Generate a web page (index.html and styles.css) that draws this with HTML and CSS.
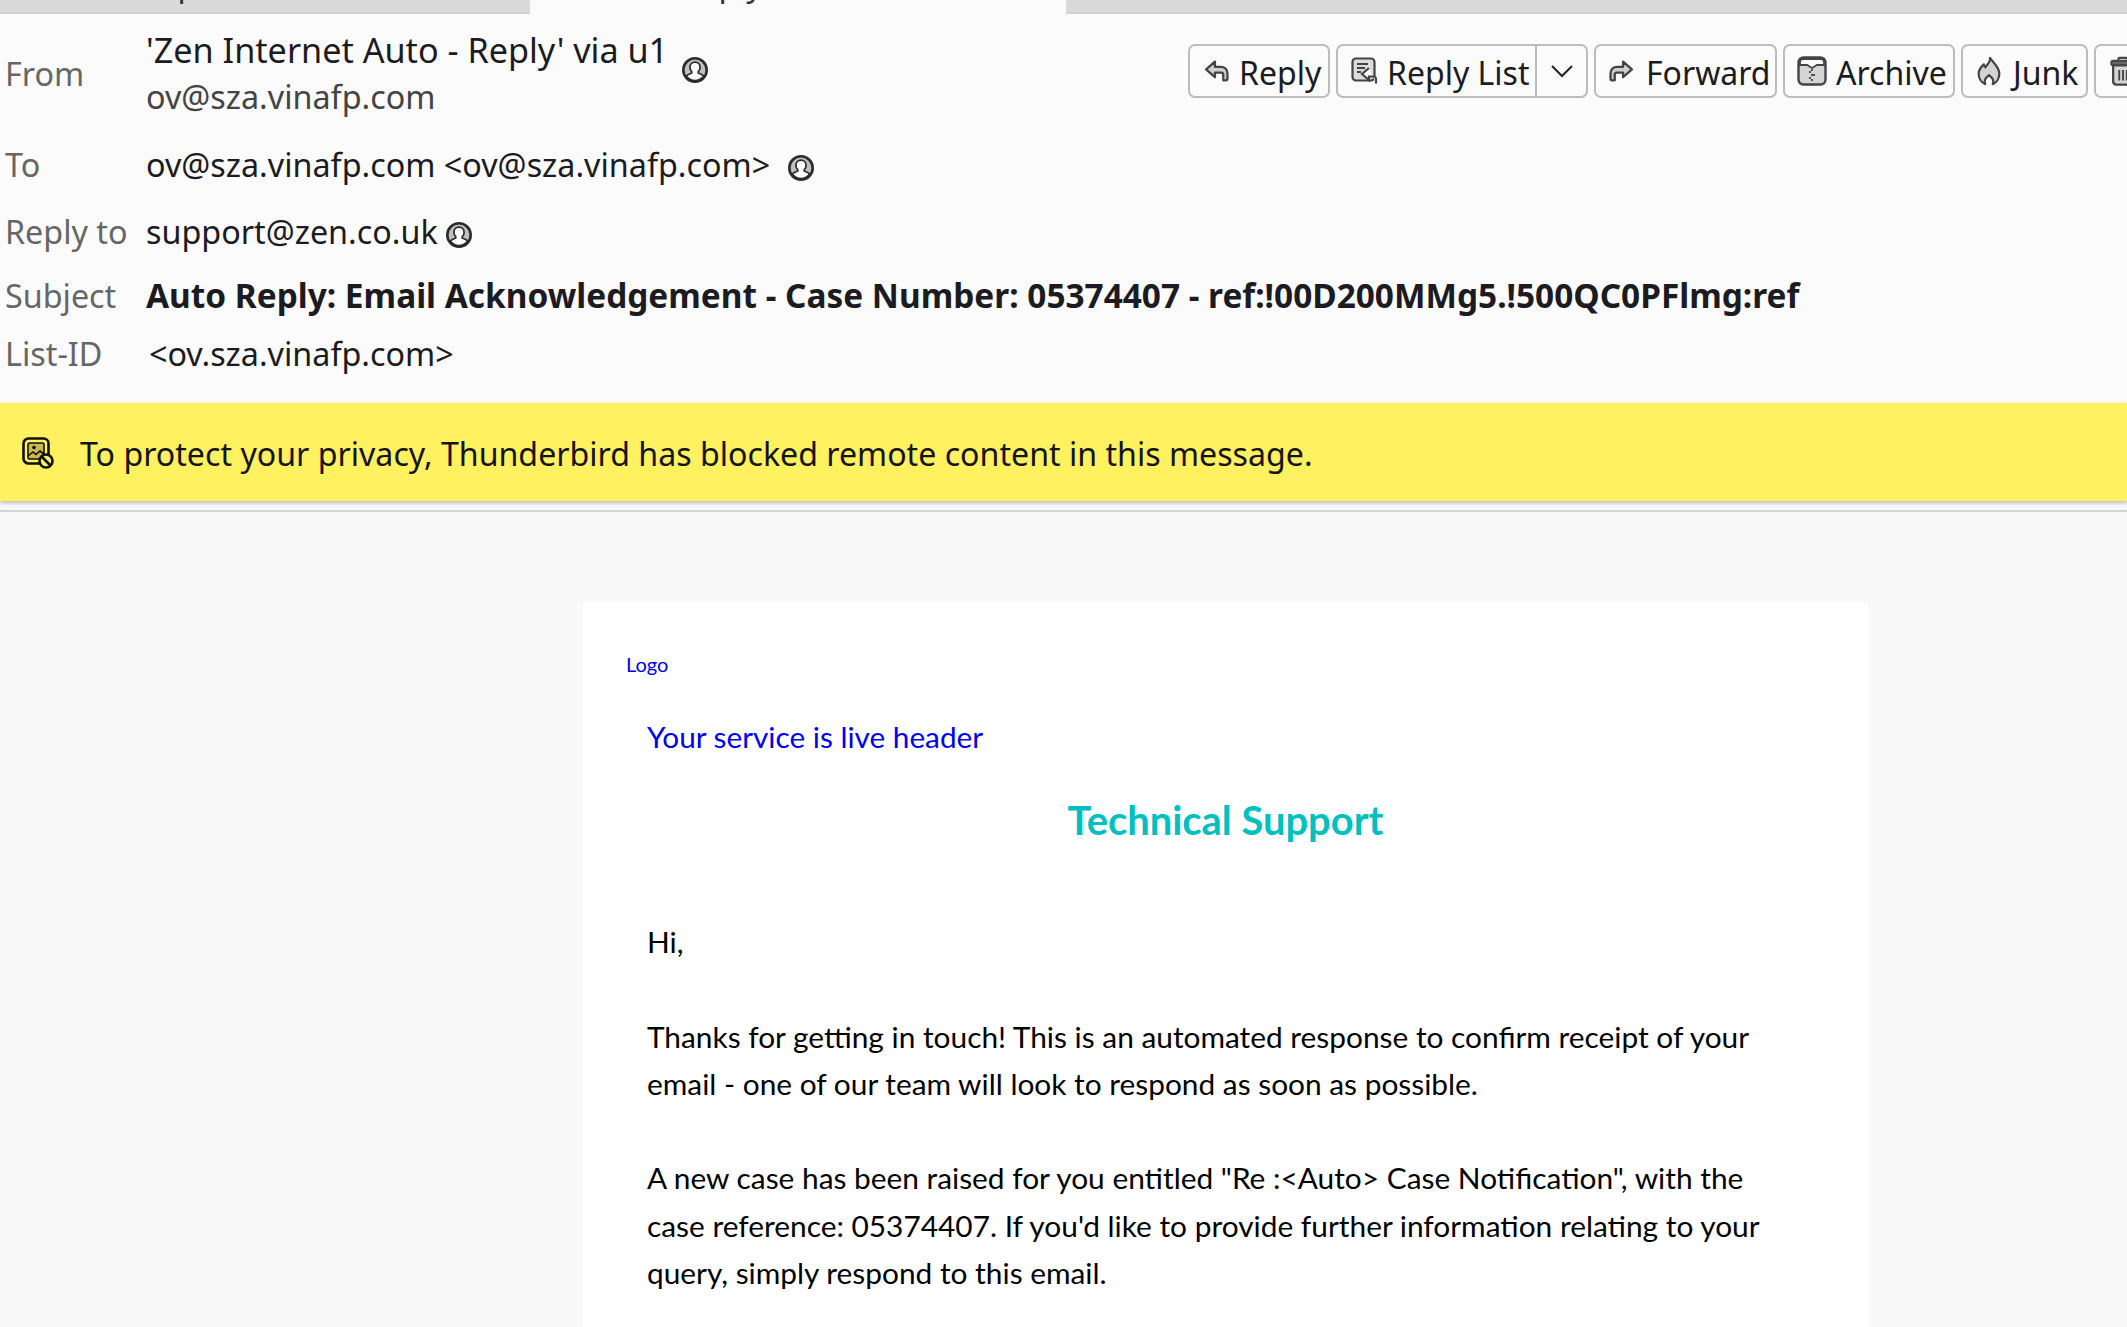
FILE: index.html
```html
<!DOCTYPE html>
<html>
<head>
  <meta charset="UTF-8">
  <title>Auto Reply: Email Acknowledgement</title>
  <link rel="stylesheet" href="styles.css">
</head>
<body>
  <svg class="defs" width="0" height="0">
    <symbol id="person" viewBox="0 0 24 24">
      <circle cx="12" cy="12" r="10.800" fill="#c0c0c0" stroke="#2b2b2b" stroke-width="2.400"/>
      <path d="M12 4.800c2.800 0 4.700 2.100 4.700 4.800 0 1.700-.7 3-1.700 3.900v1.300l3.600 1.600c.8.400 1.100 1 1.100 1.700A10.300 10.300 0 0 1 12 21.800a10.300 10.300 0 0 1-7.700-3.700c0-.7.300-1.300 1.100-1.700L9 14.800v-1.300c-1-.9-1.700-2.200-1.700-3.900 0-2.700 1.900-4.800 4.700-4.800z" fill="#fff" stroke="#2b2b2b" stroke-width="1.600"/>
    </symbol>
  </svg>

  <div class="tabs">
    <div class="tab tab-first"><span>Sp</span></div>
    <div class="tab tab-active"><span>Auto Reply</span></div>
    <div class="tab tab-rest"></div>
  </div>

  <header class="msg-header">
    <div class="row from-row">
      <div class="label">From</div>
      <div class="sender">
        <div class="sender-name">'Zen Internet Auto - Reply' via u1 <svg class="person person-from"><use href="#person"/></svg></div>
        <div class="sender-mail">ov@sza.vinafp.com</div>
      </div>
      <div class="toolbar">
        <button class="btn btn-reply">
          <svg class="ico" viewBox="0 0 24 24"><path d="M10.500 2.500 2 10l8.500 7.500V13h6c1.400 0 2 .7 2 2v5.500h2.500c1 0 1.500-.5 1.500-1.500v-5c0-4-2.500-6.500-6.500-6.500h-5.500z" fill="#d0d0d0" stroke="#444" stroke-width="2.200" stroke-linejoin="round"/></svg>
          Reply
        </button>
        <div class="btn btn-split">
          <span class="split-main">
            <svg class="ico ico-list" viewBox="0 0 28 28"><rect x="1.500" y="1.500" width="22" height="22" rx="3.500" fill="#dcdcdc" stroke="#444" stroke-width="2.200"/><path d="M6 7h11M6 11h8M6 15h4" stroke="#444" stroke-width="2"/><path d="m18 11-7 6 7 6v-3.500h4c1.500 0 3 1 3 2.500v4.500" fill="#fbfbfb" stroke="#444" stroke-width="2.200"/></svg>
            Reply List
          </span>
          <span class="split-arrow"><svg viewBox="0 0 24 14" width="24" height="14"><path d="m2 2 10 10L22 2" fill="none" stroke="#222" stroke-width="2"/></svg></span>
        </div>
        <button class="btn btn-forward">
          <svg class="ico" viewBox="0 0 24 24"><path d="M13.500 2.500 22 10l-8.500 7.500V13h-6c-1.400 0-2 .7-2 2v5.500H3c-1 0-1.500-.5-1.500-1.500v-5c0-4 2.500-6.500 6.500-6.500h5.500z" fill="#d0d0d0" stroke="#444" stroke-width="2.200" stroke-linejoin="round"/></svg>
          Forward
        </button>
        <button class="btn btn-archive">
          <svg class="ico ico-big" viewBox="0 0 30 30"><rect x="1.500" y="1.500" width="27" height="27" rx="5" fill="#d4d4d4" stroke="#444" stroke-width="2.400"/><path d="M3 9V6a3 3 0 0 1 3-3h18a3 3 0 0 1 3 3v3h-7l-5 3-5-3z" fill="#fbfbfb" stroke="#444" stroke-width="1.800"/><path d="M15 13v2m0 3v2m0 3v2M13 15v2m4 1v2m-4 1v2" stroke="#333" stroke-width="1.600"/></svg>
          Archive
        </button>
        <button class="btn btn-junk">
          <svg class="ico ico-big" viewBox="0 0 26 32"><path d="M14 2c1 4-2 6-5 10-1-1-1.500-2-1.500-3C4 12 2 15.500 2 19c0 5 3 9.500 7 11-1.500-3 0-6.500 4-9.500 4 3 5.500 6.500 4 9.500 4-1.500 7-6 7-11 0-7-5-10-10-17z" fill="#d4d4d4" stroke="#444" stroke-width="2.400" stroke-linejoin="round"/></svg>
          Junk
        </button>
        <button class="btn btn-delete" aria-label="Delete">
          <svg class="ico ico-big" viewBox="0 0 28 32"><path d="M9 5V3.500C9 2.500 9.500 2 10.500 2h7c1 0 1.500.5 1.500 1.500V5" fill="none" stroke="#444" stroke-width="2.200"/><rect x="1.500" y="5" width="25" height="5" rx="2" fill="#666" stroke="#444" stroke-width="2"/><path d="M3.500 10v17c0 2 1 3.500 3.500 3.500h14c2.500 0 3.500-1.500 3.500-3.500V10z" fill="#d4d4d4" stroke="#444" stroke-width="2.400"/><path d="M10 15v11m4-11v11m4-11v11" stroke="#444" stroke-width="2"/></svg>
        </button>
      </div>
    </div>

    <div class="row row-to">
      <div class="label">To</div>
      <div class="value">ov@sza.vinafp.com &lt;ov@sza.vinafp.com&gt; <svg class="person person-to"><use href="#person"/></svg></div>
    </div>
    <div class="row row-reply">
      <div class="label">Reply to</div>
      <div class="value">support@zen.co.uk <svg class="person person-tight"><use href="#person"/></svg></div>
    </div>
    <div class="row row-subject">
      <div class="label">Subject</div>
      <div class="value subject">Auto Reply: Email Acknowledgement - Case Number: 05374407 - ref:!00D200MMg5.!500QC0PFlmg:ref</div>
    </div>
    <div class="row row-list">
      <div class="label">List-ID</div>
      <div class="value list-id">&lt;ov.sza.vinafp.com&gt;</div>
    </div>
  </header>

  <div class="notice">
    <svg class="notice-ico" viewBox="0 0 32 32">
      <rect x="1.500" y="1.500" width="25" height="25" rx="5" fill="none" stroke="#111" stroke-width="2.600"/>
      <rect x="6" y="6" width="16" height="16" rx="1.500" fill="#c8b850" stroke="#111" stroke-width="1.600"/>
      <circle cx="12" cy="10.500" r="1.800" fill="#111"/>
      <path d="m6 19 5-4 3 2.500 4-3.500 4 3" fill="none" stroke="#111" stroke-width="1.600"/>
      <circle cx="24" cy="24" r="6.500" fill="#fff15f" stroke="#111" stroke-width="2.600"/>
      <path d="m19.500 19.500 9 9" stroke="#111" stroke-width="2.600"/>
    </svg>
    <span>To protect your privacy, Thunderbird has blocked remote content in this message.</span>
  </div>
  <div class="divider"></div>

  <main class="mail-area">
    <div class="card">
      <a class="logo">Logo</a>
      <div class="live-header">Your service is live header</div>
      <h2 class="title">Technical Support</h2>
      <div class="content">
        <p>Hi,</p>
        <p>Thanks for getting in touch! This is an automated response to confirm receipt of your<br>email - one of our team will look to respond as soon as possible.</p>
        <p>A new case has been raised for you entitled "Re :&lt;Auto&gt; Case Notification", with the<br>case reference: 05374407. If you'd like to provide further information relating to your<br>query, simply respond to this email.</p>
      </div>
    </div>
  </main>
</body>
</html>
```

FILE: styles.css
```css
html, body {
  margin: 0;
  height: 100%;
  overflow: hidden;
}

body {
  width: 2127px;
  height: 1327px;
  background-color: #f9f9fa;
  font-family: "Noto Sans", "Open Sans", sans-serif;
  color: #1c1b22;
}

.defs {
  position: absolute;
}

/* tab strip, cut off by the top of the shot */
.tabs {
  display: flex;
  height: 14px;
  overflow: hidden;
  font-size: 32px;
  line-height: 40px;
}

.tab {
  display: flex;
  align-items: flex-end;
  background: linear-gradient(#dadada 80%, #cfcfcf);
}

.tab span {
  margin-bottom: 10px;
  white-space: nowrap;
  color: #333;
}

.tab-first {
  width: 530px;
  padding-left: 160px;
  box-sizing: border-box;
}

.tab-active {
  width: 536px;
  padding-left: 71px;
  box-sizing: border-box;
  background: #fbfbfb;
}

.tab-rest {
  flex: 1;
}

.msg-header {
  padding: 12px 0 26px 5px;
  background-color: #fbfbfb;
  font-size: 32.300px;
  line-height: 47px;
}

.row {
  display: flex;
}

.label {
  width: 141px;
  flex: none;
  color: #666;
}

.from-row .label {
  align-self: center;
}

.row-to {
  margin-top: 21px;
}

.row-reply {
  margin-top: 20px;
}

.row-subject {
  margin-top: 17px;
}

.row-list {
  margin-top: 11px;
}

.sender {
  width: 1042px;
  flex: none;
}

.sender-name {
  height: 47px;
  font-size: 34.200px;
}

.sender-mail {
  color: #444;
}

.subject {
  font-weight: 700;
  font-size: 33.400px;
}

.list-id {
  padding-left: 3px;
}

.person {
  width: 26px;
  height: 26px;
  margin-left: 4px;
  vertical-align: -4px;
}

.person-from {
  margin-left: 5px;
  vertical-align: -20px;
}

.person-to {
  margin-left: 9px;
}

.person-tight {
  margin-left: 0;
}

/* toolbar runs off the right edge */
.toolbar {
  display: flex;
  gap: 6px;
  flex: 1;
  min-width: 0;
  height: 54px;
  margin-top: 18px;
  overflow: hidden;
}

.btn {
  display: flex;
  align-items: center;
  flex: none;
  box-sizing: border-box;
  height: 54px;
  padding: 4px 0 0;
  background-color: #fbfbfb;
  border: 2px solid #bcbcbc;
  border-radius: 7px;
  font-family: inherit;
  font-size: 32px;
  line-height: 46px;
  color: #1c1b22;
}

.ico {
  width: 25px;
  height: 25px;
  flex: none;
  margin: -4px 10px 0 0;
}

.ico-list {
  width: 28px;
  height: 28px;
  margin-right: 8px;
}

.ico-big {
  width: 30px;
  height: 30px;
  margin-right: 9px;
}

.btn-reply {
  width: 142px;
  padding-left: 14px;
}

.btn-split {
  width: 252px;
  padding-top: 0;
}

.split-main {
  display: flex;
  align-items: center;
  width: 199px;
  flex: none;
  padding: 4px 0 0 13px;
  box-sizing: border-box;
  height: 100%;
  border-right: 2px solid #bcbcbc;
}

.split-arrow {
  display: flex;
  justify-content: center;
  flex: 1;
}

.btn-forward {
  width: 183px;
  padding-left: 13px;
}

.btn-forward .ico {
  margin-right: 12px;
}

.btn-archive {
  width: 172px;
  padding-left: 12px;
}

.btn-junk {
  width: 127px;
  padding-left: 11px;
}

.btn-delete {
  width: 160px;
  padding-left: 12px;
}

/* remote content bar */
.notice {
  display: flex;
  align-items: center;
  height: 98px;
  padding: 2px 0 0 22px;
  box-sizing: border-box;
  background-color: #fff15f;
  box-shadow: 0 2px 4px rgba(0, 0, 0, 0.25);
  font-size: 32.150px;
  color: #15141a;
}

.notice-ico {
  width: 32px;
  height: 32px;
  margin-right: 26px;
  flex: none;
}

.divider {
  height: 2px;
  margin-top: 9px;
  background-color: #d4d4d8;
}

.mail-area {
  padding-top: 91px;
}

.card {
  width: 1285px;
  height: 724px;
  margin-left: 583px;
  padding-top: 49px;
  box-sizing: border-box;
  background-color: #fff;
  font-family: Lato, "Open Sans", sans-serif;
  color: #000;
}

.logo {
  display: block;
  margin-left: 43px;
  font-size: 20px;
  line-height: 24px;
  color: #0000ee;
}

.live-header {
  margin: 37px 0 0 64px;
  font-size: 29.750px;
  line-height: 47px;
  color: #0000ee;
}

.title {
  margin: 36px 0 0;
  text-align: center;
  font-size: 39.900px;
  line-height: 47px;
  font-weight: 700;
  color: #00bfbf;
}

.content {
  margin: 75px 0 0 64px;
  font-size: 29.850px;
  line-height: 47.300px;
}

.content p {
  margin: 0 0 47.300px;
}

.content p:last-child {
  margin-bottom: 0;
}
```
